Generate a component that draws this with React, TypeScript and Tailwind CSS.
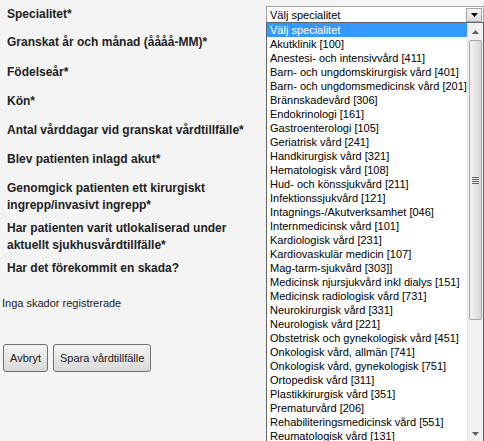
import React from "react";

const items = [
  "Välj specialitet",
  "Akutklinik [100]",
  "Anestesi- och intensivvård [411]",
  "Barn- och ungdomskirurgisk vård [401]",
  "Barn- och ungdomsmedicinsk vård [201]",
  "Brännskadevård [306]",
  "Endokrinologi [161]",
  "Gastroenterologi [105]",
  "Geriatrisk vård [241]",
  "Handkirurgisk vård [321]",
  "Hematologisk vård [108]",
  "Hud- och könssjukvård [211]",
  "Infektionssjukvård [121]",
  "Intagnings-/Akutverksamhet [046]",
  "Internmedicinsk vård [101]",
  "Kardiologisk vård [231]",
  "Kardiovaskulär medicin [107]",
  "Mag-tarm-sjukvård [303]]",
  "Medicinsk njursjukvård inkl dialys [151]",
  "Medicinsk radiologisk vård [731]",
  "Neurokirurgisk vård [331]",
  "Neurologisk vård [221]",
  "Obstetrisk och gynekologisk vård [451]",
  "Onkologisk vård, allmän [741]",
  "Onkologisk vård, gynekologisk [751]",
  "Ortopedisk vård [311]",
  "Plastikkirurgisk vård [351]",
  "Prematurvård [206]",
  "Rehabiliteringsmedicinsk vård [551]",
  "Reumatologisk vård [131]",
];

const font = { fontFamily: '"Liberation Sans", Arial, sans-serif' };

function Label({ children, h }: { children: React.ReactNode; h: string }) {
  return (
    <div className={`${h} pl-[7px] text-[12px] font-bold leading-[17px] text-[#222]`}>
      {children}
    </div>
  );
}

export default function App() {
  return (
    <div className="relative h-[441px] w-[484px] overflow-hidden bg-[#f4f4f4]" style={font}>
      <div className="flex flex-col pt-[6px]">
        <Label h="h-[28px]">Specialitet*</Label>
        <Label h="h-[30px]">Granskat år och månad (åååå-MM)*</Label>
        <Label h="h-[29px]">Födelseår*</Label>
        <Label h="h-[29px]">Kön*</Label>
        <Label h="h-[29px]">Antal vårddagar vid granskat vårdtillfälle*</Label>
        <Label h="h-[29px]">Blev patienten inlagd akut*</Label>
        <Label h="h-[40px]">
          Genomgick patienten ett kirurgiskt
          <br />
          ingrepp/invasivt ingrepp*
        </Label>
        <Label h="h-[40px]">
          Har patienten varit utlokaliserad under
          <br />
          aktuellt sjukhusvårdtillfälle*
        </Label>
        <Label h="h-[36px]">Har det förekommit en skada?</Label>
        <div className="pl-[2px] text-[11px] leading-[14px] text-[#222]">Inga skador registrerade</div>
        <div className="mt-[34px] flex gap-[5px] pl-[3px]">
          <button className="h-[28px] rounded-[3px] border border-[#707070] bg-gradient-to-b from-[#f4f4f4] to-[#d9d9d9] px-[6px] text-[11px] text-[#222]">
            Avbryt
          </button>
          <button className="h-[28px] rounded-[3px] border border-[#707070] bg-gradient-to-b from-[#f4f4f4] to-[#d9d9d9] px-[6px] text-[11px] text-[#222]">
            Spara vårdtillfälle
          </button>
        </div>
      </div>

      {/* select box */}
      <div className="absolute left-[266px] top-[6px] flex h-[17px] w-[218px] items-center border border-[#a5a5a5] bg-white">
        <span className="flex-1 pl-[3px] text-[11px] leading-[14px] text-black">Välj specialitet</span>
        <div className="mr-[1px] flex h-[14px] w-[16px] items-center justify-center border border-[#a7a7a7] bg-gradient-to-b from-[#f6f6f6] to-[#dcdcdc]">
          <svg width="7" height="4" viewBox="0 0 7 4">
            <path d="M0 0h7L3.5 4z" fill="#000" />
          </svg>
        </div>
      </div>

      {/* dropdown list */}
      <div className="absolute left-[266px] top-[22px] flex h-[430px] w-[218px] border border-[#646464] bg-white">
        <div className="flex flex-1 flex-col">
          {items.map((it, i) => (
            <div
              key={it}
              className={`h-[14px] shrink-0 whitespace-nowrap pl-[3px] text-[11px] leading-[14px] ${
                i === 0 ? "bg-[#3399ff] text-white" : "text-black"
              }`}
            >
              {it}
            </div>
          ))}
        </div>
        <div className="flex h-[419px] w-[17px] flex-col bg-[#f0f0f0] border-l border-[#e4e4e4]">
          <div className="flex h-[17px] items-center justify-center">
            <svg width="7" height="4" viewBox="0 0 7 4">
              <path d="M3.5 0L7 4H0z" fill="#606060" />
            </svg>
          </div>
          <div className="mx-[1px] flex h-[280px] items-center justify-center rounded-[2px] border border-[#a8a8a8] bg-gradient-to-r from-[#f2f2f2] to-[#d6d6d6]">
            <div className="flex flex-col gap-[1px]">
              <div className="h-[1px] w-[7px] bg-[#666]" />
              <div className="h-[1px] w-[7px] bg-[#666]" />
              <div className="h-[1px] w-[7px] bg-[#666]" />
              <div className="h-[1px] w-[7px] bg-[#666]" />
            </div>
          </div>
          <div className="flex-1" />
          <div className="flex h-[17px] items-center justify-center">
            <svg width="7" height="4" viewBox="0 0 7 4">
              <path d="M0 0h7L3.5 4z" fill="#606060" />
            </svg>
          </div>
        </div>
      </div>
    </div>
  );
}
